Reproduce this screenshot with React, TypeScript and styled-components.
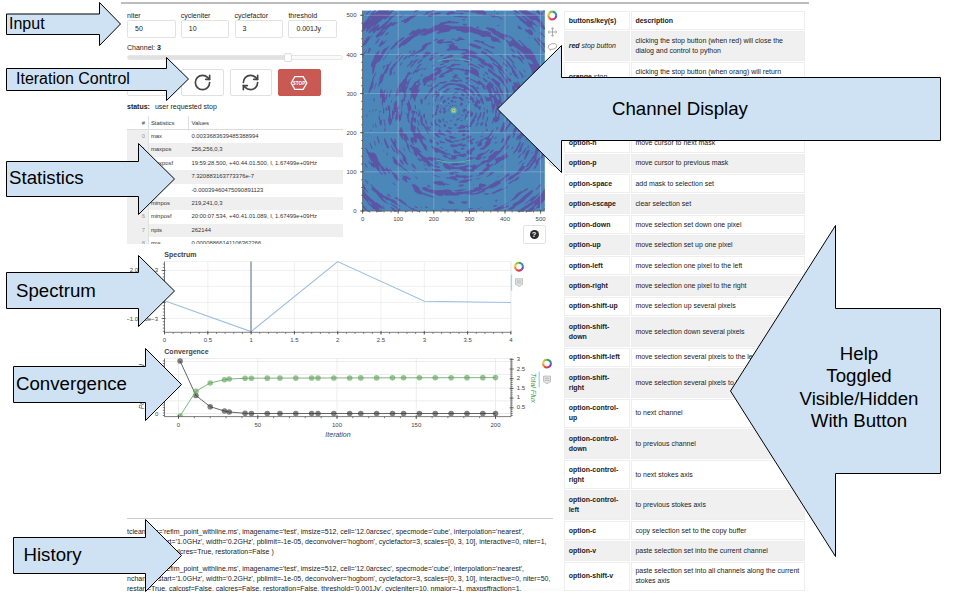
import React from "react";
import styled, { createGlobalStyle } from "styled-components";
import { RotateCw, RefreshCw } from "lucide-react";

const GlobalStyle = createGlobalStyle`
  * { box-sizing: border-box; }
  body { margin: 0; background: #fff; }
  svg text { font-family: "Liberation Sans", Arial, sans-serif; }
`;

const Stage = styled.main`
  position: relative;
  width: 966px;
  height: 599px;
  overflow: hidden;
  font-family: "Liberation Sans", Arial, sans-serif;
  color: #222;
`;

const Panel = styled.section`
  display: grid;
  grid-template-columns: 437px 241px;
  width: 688px;
  height: 589px;
  margin: 2px 0 0 121px;
  padding-left: 6px;
  border-top: 2px solid #bdbdbd;
  overflow: hidden;
  background: linear-gradient(#fff 0 581px, #f8f8f8 589px);
`;

const Column = styled.div`
  display: flex;
  flex-direction: column;
  min-width: 0;
`;

const TopArea = styled.div`
  display: grid;
  grid-template-columns: 216px 217px;
  height: 240px;
  overflow: hidden;
`;

const Controls = styled.div`
  display: flex;
  flex-direction: column;
  padding-top: 7px;
  font-size: 7px;
`;

const Fields = styled.div`
  display: grid;
  grid-template-columns: repeat(4, 48.5px);
  column-gap: 5.3px;
`;

const Field = styled.label`
  line-height: 9px;
`;

const FieldBox = styled.div`
  height: 18px;
  padding: 0 7px;
  border: 1px solid #e2e2e2;
  border-radius: 2px;
  line-height: 16px;
`;

const ChannelLabel = styled.div`
  margin-top: 5px;
  line-height: 9px;
`;

const Track = styled.div`
  display: flex;
  align-items: center;
  height: 5px;
  margin-top: 3px;
  border: 1px solid #e6e6e6;
  border-radius: 3px;
  background: linear-gradient(90deg, #e1e1e1 0 158px, #fafafa 158px);
`;

const Handle = styled.div`
  width: 8px;
  height: 9px;
  flex: none;
  margin-left: 156px;
  border: 1px solid #ddd;
  border-radius: 2px;
  background: #fff;
`;

const Buttons = styled.div`
  display: flex;
  gap: 6px;
  margin-top: 9px;
`;

const IconButton = styled.button<{ $stop?: boolean; $wideGap?: boolean }>`
  display: flex;
  align-items: center;
  justify-content: center;
  width: 42.4px;
  height: 27px;
  padding: 0;
  margin-right: ${(p) => (p.$wideGap ? "6px" : "0")};
  border: 1px solid ${(p) => (p.$stop ? "#c9564f" : "#e0e0e0")};
  border-radius: 2px;
  background: ${(p) => (p.$stop ? "#c95953" : "#fff")};
  color: #444;
`;

const Status = styled.div`
  display: flex;
  gap: 5px;
  margin-top: 5.5px;
  line-height: 9px;
`;

const Stats = styled.div`
  margin-top: 5px;
  font-size: 5.9px;
  color: #333;
`;

const StatRow = styled.div<{ $shade?: boolean; $head?: boolean }>`
  display: grid;
  grid-template-columns: 21.5px 40.5px 1fr;
  height: ${(p) => (p.$head ? "14.3px" : "13.45px")};
  line-height: ${(p) => (p.$head ? "15px" : "13.4px")};
  background: ${(p) => (p.$shade ? "#efefef" : "#fff")};
  border-bottom: ${(p) => (p.$head ? "0.5px solid #ddd" : "0")};
  white-space: nowrap;
`;

const StatIndex = styled.span<{ $head?: boolean }>`
  padding-right: 2.5px;
  text-align: right;
  color: ${(p) => (p.$head ? "#444" : "#999")};
  background: ${(p) => (p.$head ? "transparent" : "#efefef")};
  border-right: 1px solid #e0e0e0;
`;

const StatCell = styled.span<{ $divider?: boolean }>`
  padding-left: 2.4px;
  border-right: ${(p) => (p.$divider ? "1px solid #e0e0e0" : "0")};
`;

const HelpButton = styled.button`
  display: flex;
  align-items: center;
  justify-content: center;
  width: 23px;
  height: 19px;
  margin: 4px 0 0 179.5px;
  padding: 0;
  border: 1px solid #e3e3e3;
  border-radius: 2px;
  background: #fff;
`;

const HelpDot = styled.span`
  width: 9px;
  height: 9px;
  border-radius: 50%;
  background: #2b2b2b;
  color: #fff;
  font: bold 7.5px/9px "Liberation Sans", sans-serif;
  text-align: center;
`;

const History = styled.div`
  width: 426px;
  margin-top: 76px;
  padding-top: 8px;
  border-top: 1px solid #ccc;
  font-size: 7.01px;
  line-height: 10px;
  color: #222;
`;

const HistoryEntry = styled.p`
  margin: 0 0 7px;
  white-space: pre;
`;

const HistoryLine = styled.span`
  display: block;
`;

const HelpTable = styled.div`
  display: flex;
  flex-direction: column;
  padding-top: 7px;
`;

const HelpRow = styled.div<{ $shade: boolean; $lines: number }>`
  display: grid;
  grid-template-columns: 65.5px 174px;
  column-gap: 1.2px;
  height: ${(p) => 10.35 + p.$lines * 10.1}px;
  padding-bottom: 1px;
  font-size: 6.98px;
  line-height: 10px;
  white-space: nowrap;
  > div { background: ${(p) => (p.$shade ? "#f0f0f0" : "#fff")}; }
`;

const HelpCell = styled.div<{ $bold?: boolean }>`
  display: flex;
  flex-direction: column;
  justify-content: center;
  padding-left: 3.7px;
  border: 1px solid #eeeeee;
  font-weight: ${(p) => (p.$bold ? "bold" : "normal")};
  color: #222;
`;

const HelpLine = styled.span`
  display: block;
  height: 10px;
`;

const PlainText = styled.span`
  font-weight: normal;
`;

const Plot = styled.svg`
  display: block;
  flex: none;
`;

const ArrowBox = styled.div<{ $x: number; $y: number; $w: number; $h: number }>`
  position: absolute;
  left: ${(p) => p.$x}px;
  top: ${(p) => p.$y}px;
  width: ${(p) => p.$w}px;
  height: ${(p) => p.$h}px;
  display: grid;
  align-items: center;
  > * { grid-area: 1 / 1; }
`;

const ArrowText = styled.span<{ $pad: number; $size: number; $lift: number; $centerWidth?: number }>`
  z-index: 1;
  margin-left: ${(p) => p.$pad}px;
  margin-bottom: ${(p) => p.$lift}px;
  width: ${(p) => (p.$centerWidth ? `${p.$centerWidth}px` : "auto")};
  text-align: ${(p) => (p.$centerWidth ? "center" : "left")};
  font-size: ${(p) => p.$size}px;
  line-height: 22.3px;
  white-space: pre;
  color: #000;
`;

type ArrowProps = {
  tail: number; neck: number; tip: number;
  top: number; bodyTop: number; bodyBottom: number; bottom: number;
  text: string; pad: number; size?: number; lift?: number; centerWidth?: number;
};

function Arrow({ tail, neck, tip, top, bodyTop, bodyBottom, bottom, text, pad, size = 18.67, lift = 0, centerWidth }: ArrowProps) {
  const x = Math.floor(Math.min(tail, tip)) - 1;
  const y = Math.floor(top) - 1;
  const w = Math.ceil(Math.abs(tip - tail)) + 3;
  const h = Math.ceil(bottom - top) + 3;
  const mid = (top + bottom) / 2;
  return (
    <ArrowBox $x={x} $y={y} $w={w} $h={h}>
      <Plot width={w} height={h} viewBox={`${x} ${y} ${w} ${h}`}>
        <path
          d={`M${tail} ${bodyTop}H${neck}V${top}L${tip} ${mid}L${neck} ${bottom}V${bodyBottom}H${tail}Z`}
          fill="#cfe2f3" stroke="#000" strokeWidth="1"
        />
      </Plot>
      <ArrowText $pad={pad} $size={size} $lift={lift} $centerWidth={centerWidth}>{text}</ArrowText>
    </ArrowBox>
  );
}

const RING = ["#2f9e5b", "#3a7fc4", "#6a4fb3", "#c22f7c", "#e2483c", "#f08a2c", "#eec23a", "#8fc04a"];

function BokehLogo({ x, y }: { x: number; y: number }) {
  const pt = (a: number, r: number) => `${x + r * Math.sin(a)} ${y - r * Math.cos(a)}`;
  return (
    <g fill="none" strokeWidth="2.1">
      {RING.map((c, i) => {
        const a = (i * Math.PI) / 4;
        return <path key={c} stroke={c} d={`M${pt(a, 3.9)}A3.9 3.9 0 0 1 ${pt(a + 0.82, 3.9)}`} />;
      })}
    </g>
  );
}

function HoverIcon({ x, y }: { x: number; y: number }) {
  return (
    <g>
      <path d={`M${x - 3.5} ${y - 3.5}h7v5.5l-3.5 2.2l-3.5 -2.2z`} fill="#e4e4e4" stroke="#b5b5b5" strokeWidth=".8" />
      <path d={`M${x - 2.2} ${y - 1.3}h4.4M${x - 2.2} ${y + 0.7}h4.4`} stroke="#a5a5a5" strokeWidth=".7" />
    </g>
  );
}

/* Sky image: concentric sidelobe rings around a point source. */
const CX = 453.7, CY = 110.5, X0 = 362.6, X1 = 544.8, Y0 = 10.6, Y1 = 211;

function hash(i: number, j: number) {
  let n = (Math.imul(i, 374761393) + Math.imul(j, 668265263)) | 0;
  n = Math.imul(n ^ (n >>> 13), 1274126177);
  return ((n ^ (n >>> 16)) >>> 0) / 4294967295;
}
function noise(x: number, y: number) {
  const i = Math.floor(x), j = Math.floor(y);
  const s = (t: number) => t * t * (3 - 2 * t);
  const u = s(x - i), v = s(y - j);
  return (hash(i, j) * (1 - u) + hash(i + 1, j) * u) * (1 - v) + (hash(i, j + 1) * (1 - u) + hash(i + 1, j + 1) * u) * v;
}
const bump = (v: number, c: number, w: number) => Math.exp(-(((v - c) / w) ** 2));

function sidelobes() {
  const step = 0.6;
  let d = "";
  for (let y = Y0; y < Y1; y += step) {
    let start = -1;
    for (let x = X0; x < X1 + step; x += step) {
      const dx = x - CX, dy = y - CY;
      const t = Math.atan2(dy, dx);
      const a = Math.abs(t);
      const fold = a > Math.PI / 2 ? Math.PI - a : a;
      const r = Math.hypot(dx, dy);
      const n = noise(r / 1.5 + 40, t * (6 + r / 11) + 90) * 0.6 + noise(r / 3.4 + 7, t * 5.5 + 30) * 0.4;
      const main = 83 + 11 * bump(fold, 0.62, 0.3);
      const steep = Math.min(1, fold / 0.45);
      let level = 0.37;
      level += 0.42 * bump(r, main, 3.2) * (bump(fold, 1.57, 0.5) + bump(fold, 0.58, 0.22));
      level -= 0.13 * bump(r, main + 10, 6.5) + 0.1 * bump(r, main - 8, 3.5);
      level -= 0.1 * (1 - steep) * (r > 85 ? 1 : 0);
      level += 0.3 * bump(r, 123, 3.4) * bump(fold, 0.9, 0.35);
      level += 0.16 * bump(r, 112, 2.6) * bump(fold, 0.9, 0.3);
      level += 0.1 * bump(r, 70, 4) * (1 - steep * 0.6);
      level += 0.12 * bump(r, 57, 3.5) + 0.16 * bump(r, 43, 4);
      level += 0.05 * bump(r, 31, 5) - 0.1 * bump(r, 6, 5);
      if (r < 34) level += 0.13 * Math.sin(r * 1.5);
      const on = x < X1 && r > 5 && n < level;
      if (on && start < 0) start = x;
      if (!on && start >= 0) {
        d += `M${start.toFixed(1)} ${y.toFixed(1)}H${Math.min(x, X1).toFixed(1)}v.65H${start.toFixed(1)}z`;
        start = -1;
      }
    }
  }
  return d;
}
const SIDELOBES = sidelobes();
const range = (n: number) => Array.from({ length: n }, (_, i) => i);

function ChannelPlot() {
  const px = (v: number) => 362.6 + v * 0.356;
  const py = (v: number) => 211 - v * 0.3915;
  return (
    <Plot width="217" height="217" viewBox="343 4 217 217">
      <rect x={X0} y={Y0} width={X1 - X0} height={Y1 - Y0} fill="#4b87b9" />
      <path d={SIDELOBES} fill="#5c50a3" fillOpacity=".92" />
      <path d="M438 61q16 -4.5 33 0M436 160q17 5 34 0" fill="none" stroke="#58b0ac" strokeWidth="1.2" />
      <path d="M441 91v5M441 102v4M468 105v6M467 117v3M455 79h2M416 84h2M490 137h2M473 103h2" stroke="#5cb2aa" strokeWidth=".8" />
      <g stroke="#c9d9ea" strokeOpacity=".42" strokeWidth=".8">
        {range(6).map((i) => (
          <path key={i} d={`M${px(i * 100)} ${Y0}V${Y1}M${X0} ${py(i * 100)}H${X1}`} />
        ))}
      </g>
      <circle cx={CX} cy={CY} r="2.9" fill="#65c2a5" />
      <circle cx={CX} cy={CY} r="1.5" fill="#e8cf7a" />
      <circle cx={CX} cy={CY} r=".7" fill="#d4594e" />
      <g stroke="#444" strokeWidth=".7">
        <path d={`M${X0} ${Y0}V${Y1}H${X1}`} fill="none" />
        {range(6).map((i) => <path key={i} d={`M${px(i * 100)} 209.4v4.4M360 ${py(i * 100)}h4`} />)}
        {range(26).map((i) => <path key={i} d={`M${px(i * 20)} 211v1.5M361.2 ${py(i * 20)}h1.4`} />)}
      </g>
      <g fontSize="6" fill="#444">
        {range(6).map((i) => (
          <React.Fragment key={i}>
            <text x={px(i * 100)} y="221" textAnchor="middle">{i * 100}</text>
            <text x="356.5" y={py(i * 100) + 2.2} textAnchor="end">{i * 100}</text>
          </React.Fragment>
        ))}
      </g>
      <BokehLogo x={552.3} y={15.5} />
      <path d="M552.5 27.8v8.4M548.3 32h8.4M551.2 29l1.3-1.4 1.3 1.4M551.2 35l1.3 1.4 1.3-1.4M549.5 30.7l-1.4 1.3 1.4 1.3M555.5 30.7l1.4 1.3-1.4 1.3" fill="none" stroke="#999" strokeWidth=".8" />
      <ellipse cx="552.5" cy="46.5" rx="4.4" ry="2.8" transform="rotate(-15 552.5 46.5)" fill="none" stroke="#aaa" strokeWidth=".9" />
      <path d="M549.5 49l1 2.2M549 162q2 5 7 4" fill="none" stroke="#bbb" strokeWidth=".9" />
    </Plot>
  );
}

function SpectrumPlot() {
  return (
    <Plot width="433" height="102" viewBox="127 244 433 102">
      <text x="164.3" y="257.3" fontSize="7" fontWeight="bold" fill="#444">Spectrum</text>
      <g stroke="#ececec" strokeWidth=".8" fill="none">
        <path d="M164.5 261.6H511V332" />
        {[270.5, 286.4, 302.5, 318.5].map((y) => <path key={y} d={`M164.5 ${y}H511`} />)}
        {range(9).map((i) => <path key={i} d={`M${164.5 + i * 43.3} 261.6V332`} />)}
      </g>
      <path d="M251 261.6V332" stroke="#70859a" strokeWidth="1.2" />
      <path d="M164.5 300.8L251 331.6L337.7 261.6L424.4 301.3L511 302.5" fill="none" stroke="#9dbfdf" strokeWidth="1.1" />
      <g stroke="#444" strokeWidth=".7" fill="none">
        <path d="M164.5 261.6V332.3H511" />
        {range(9).map((i) => <path key={i} d={`M${164.5 + i * 43.3} 330.8v3.8`} />)}
        {range(41).map((i) => <path key={i} d={`M${164.5 + i * 8.66} 332.3v1.6`} />)}
        {range(22).map((i) => <path key={i} d={`M162.8 ${264.1 + i * 3.2}h1.7`} />)}
        {[270.5, 286.4, 302.5, 318.5].map((y) => <path key={y} d={`M161.6 ${y}h4`} />)}
      </g>
      <g fontSize="6" fill="#444">
        {range(9).map((i) => <text key={i} x={164.5 + i * 43.3} y="342.2" textAnchor="middle">{i / 2}</text>)}
        <text x="158.2" y="272.3" textAnchor="end">2.0000e−3</text>
        <text x="158.2" y="320.8" textAnchor="end">−1.0000e−3</text>
      </g>
      <path d="M511.5 274.5V290.5" stroke="#a6d2ee" strokeWidth="1.3" />
      <BokehLogo x={519} y={266.7} />
      <HoverIcon x={519} y={282.3} />
    </Plot>
  );
}

const ITERATIONS = [1, 11, 20, 29, 32, 42, 46, 56, 64, 74, 84, 88, 98, 108, 115, 125, 135, 142, 152, 162, 172, 182, 192, 200];
const RESIDUAL = [361, 395.5, 406.7, 411, 412, 413.3];
const FLUX = [416, 391.2, 383, 379.7, 379, 378.3];

function ConvergencePlot() {
  const px = (v: number) => 178.5 + v * 1.585;
  const res = ITERATIONS.map((v, i) => [px(v), RESIDUAL[i] ?? 413.5]);
  const flux = ITERATIONS.map((v, i) => [px(v), FLUX[i] ?? 378.4 - i * 0.035]);
  const line = (p: number[][]) => "M" + p.map((q) => q.join(" ")).join("L");
  return (
    <Plot width="433" height="96" viewBox="127 346 433 96">
      <clipPath id="frame"><rect x="164" y="356" width="347" height="60.6" /></clipPath>
      <text x="164.3" y="354" fontSize="7" fontWeight="bold" fill="#444">Convergence</text>
      <g stroke="#e8e8e8" strokeWidth=".8" fill="none">
        <path d="M164.5 358.5H511" />
        {[361.5, 374.5, 388, 400.8, 413.5].map((y) => <path key={y} d={`M164.5 ${y}H511`} />)}
        {range(5).map((i) => <path key={i} d={`M${px(i * 50)} 358.5V416.5`} />)}
      </g>
      <g clipPath="url(#frame)">
        <path d={line(res)} fill="none" stroke="#666" strokeWidth="1" />
        {res.map(([x, y]) => <circle key={x} cx={x} cy={y} r="2.8" fill="#333" fillOpacity=".62" />)}
        <path d={line(flux)} fill="none" stroke="#7fb67c" strokeWidth="1" />
        {flux.map(([x, y]) => <circle key={x} cx={x} cy={y} r="2.8" fill="#5ba256" fillOpacity=".62" />)}
      </g>
      <g stroke="#444" strokeWidth=".7" fill="none">
        <path d="M164.5 358.5V416.6H511V358.5" />
        {range(5).map((i) => <path key={i} d={`M${px(i * 50)} 415v4`} />)}
        {range(21).map((i) => <path key={i} d={`M${px(i * 10)} 416.6v1.6`} />)}
        {range(22).map((i) => <path key={i} d={`M162.8 ${360.9 + i * 2.6}h1.7`} />)}
        {range(30).map((i) => <path key={i} d={`M511 ${359.3 + i * 1.94}h1.7`} />)}
        {range(6).map((i) => <path key={i} d={`M509.6 ${359.3 + i * 9.7}h4.2`} />)}
      </g>
      <g fontSize="6" fill="#444">
        {range(5).map((i) => <text key={i} x={px(i * 50)} y="427" textAnchor="middle">{i * 50}</text>)}
        {["3", "2.5", "2", "1.5", "1", "0.5"].map((t, i) => <text key={t} x="516.8" y={361 + i * 9.6}>{t}</text>)}
        <text x="158.3" y="415.5" textAnchor="end">0</text>
      </g>
      <text x="338" y="437.2" textAnchor="middle" fontSize="7" fontStyle="italic" fill="#444">Iteration</text>
      <text transform="translate(531.2 373) rotate(90)" fontSize="7" fontStyle="italic" fill="#4f9d4a">Total Flux</text>
      <text transform="translate(144 409.3) rotate(-90)" fontSize="7" fontStyle="italic" fill="#444">Peak Residual</text>
      <path d="M539.2 371.5V387.5" stroke="#a6d2ee" strokeWidth="1.3" />
      <BokehLogo x={547} y={363.6} />
      <HoverIcon x={547} y={379.6} />
    </Plot>
  );
}

const FIELDS = [["niter", "50"], ["cycleniter", "10"], ["cyclefactor", "3"], ["threshold", "0.001Jy"]];

const STATS = [
  ["max", "0.0033683639485388994"],
  ["maxpos", "256,256,0,3"],
  ["maxposf", "19:59:28.500, +40.44.01.500, I, 1.67499e+09Hz"],
  ["mean", "7.320883163773376e-7"],
  ["min", "-0.00039460475090891123"],
  ["minpos", "219,241,0,3"],
  ["minposf", "20:00:07.534, +40.41.01.089, I, 1.67499e+09Hz"],
  ["npts", "262144"],
  ["rms", "0.00008866141106362266"],
];

type Help = { keys: React.ReactNode[]; text: string[] };
const HELP: Help[] = [
  { keys: ["buttons/key(s)"], text: ["description"] },
  { keys: [<i key="r">red <PlainText>stop button</PlainText></i>], text: ["clicking the stop button (when red) will close the", "dialog and control to python"] },
  { keys: [<span key="o">orange <PlainText><i>stop</i></PlainText></span>, ""], text: ["clicking the stop button (when orang) will return", "", ""] },
  { keys: [""], text: ["", ""] },
  { keys: ["option-n"], text: ["move cursor to next mask"] },
  { keys: ["option-p"], text: ["move cursor to previous mask"] },
  { keys: ["option-space"], text: ["add mask to selection set"] },
  { keys: ["option-escape"], text: ["clear selection set"] },
  { keys: ["option-down"], text: ["move selection set down one pixel"] },
  { keys: ["option-up"], text: ["move selection set up one pixel"] },
  { keys: ["option-left"], text: ["move selection one pixel to the left"] },
  { keys: ["option-right"], text: ["move selection one pixel to the right"] },
  { keys: ["option-shift-up"], text: ["move selection up several pixels"] },
  { keys: ["option-shift-", "down"], text: ["move selection down several pixels"] },
  { keys: ["option-shift-left"], text: ["move selection several pixels to the left"] },
  { keys: ["option-shift-", "right"], text: ["move selection several pixels to the right"] },
  { keys: ["option-control-", "up"], text: ["to next channel"] },
  { keys: ["option-control-", "down"], text: ["to previous channel"] },
  { keys: ["option-control-", "right"], text: ["to next stokes axis"] },
  { keys: ["option-control-", "left"], text: ["to previous stokes axis"] },
  { keys: ["option-c"], text: ["copy selection set to the copy buffer"] },
  { keys: ["option-v"], text: ["paste selection set into the current channel"] },
  { keys: ["option-shift-v"], text: ["paste selection set into all channels along the current", "stokes axis"] },
];

const HISTORY = [
  [
    "tclean( vis='refim_point_withline.ms', imagename='test', imsize=512, cell='12.0arcsec', specmode='cube', interpolation='nearest',",
    "nchan=5, start='1.0GHz', width='0.2GHz', pblimit=-1e-05, deconvolver='hogbom', cyclefactor=3, scales=[0, 3, 10], interactive=0, niter=1,",
    "calcpsf=True, calcres=True, restoration=False )",
  ],
  [
    "tclean( vis='refim_point_withline.ms', imagename='test', imsize=512, cell='12.0arcsec', specmode='cube', interpolation='nearest',",
    "nchan=5, start='1.0GHz', width='0.2GHz', pblimit=-1e-05, deconvolver='hogbom', cyclefactor=3, scales=[0, 3, 10], interactive=0, niter=50,",
    "restart=True, calcpsf=False, calcres=False, restoration=False, threshold='0.001Jy', cycleniter=10, nmajor=-1, maxpsffraction=1,",
  ],
];

export default function App() {
  return (
    <Stage>
      <GlobalStyle />
      <Panel>
        <Column>
          <TopArea>
            <Controls>
              <Fields>
                {FIELDS.map(([label, value]) => (
                  <Field key={label}>{label}<FieldBox>{value}</FieldBox></Field>
                ))}
              </Fields>
              <ChannelLabel>Channel: <b>3</b></ChannelLabel>
              <Track><Handle /></Track>
              <Buttons>
                <IconButton $wideGap />
                <IconButton><RotateCw size={19} strokeWidth={2.1} /></IconButton>
                <IconButton><RefreshCw size={19} strokeWidth={2.1} /></IconButton>
                <IconButton $stop>
                  <Plot width="18" height="16" viewBox="0 0 18 16">
                    <path d="M1.2 8L4.8 1.6H13.2L16.8 8L13.2 14.4H4.8Z" fill="none" stroke="#fff" strokeWidth="1.3" />
                    <text x="9" y="9.7" textAnchor="middle" fontSize="4.6" fontWeight="bold" fill="#fff">STOP</text>
                  </Plot>
                </IconButton>
              </Buttons>
              <Status><b>status:</b><span>user requested stop</span></Status>
              <Stats>
                <StatRow $head>
                  <StatIndex $head>#</StatIndex>
                  <StatCell $divider>Statistics</StatCell>
                  <StatCell>Values</StatCell>
                </StatRow>
                {STATS.map(([name, value], i) => (
                  <StatRow key={name} $shade={i % 2 === 1}>
                    <StatIndex>{i}</StatIndex>
                    <StatCell>{name}</StatCell>
                    <StatCell>{value}</StatCell>
                  </StatRow>
                ))}
              </Stats>
            </Controls>
            <div>
              <ChannelPlot />
              <HelpButton><HelpDot>?</HelpDot></HelpButton>
            </div>
          </TopArea>
          <SpectrumPlot />
          <ConvergencePlot />
          <History>
            {HISTORY.map((entry, i) => (
              <HistoryEntry key={i}>
                {entry.map((line) => <HistoryLine key={line}>{line}</HistoryLine>)}
              </HistoryEntry>
            ))}
          </History>
        </Column>
        <HelpTable>
          {HELP.map((row, i) => (
            <HelpRow key={i} $shade={i % 2 === 1} $lines={Math.max(row.keys.length, row.text.length)}>
              <HelpCell $bold>{row.keys.map((k, j) => <HelpLine key={j}>{k}</HelpLine>)}</HelpCell>
              <HelpCell $bold={i === 0}>{row.text.map((t, j) => <HelpLine key={j}>{t}</HelpLine>)}</HelpCell>
            </HelpRow>
          ))}
        </HelpTable>
      </Panel>

      <Arrow tail={6.5} neck={99.5} tip={120.5} top={2.5} bodyTop={14} bodyBottom={34.5} bottom={45.5} text="Input" pad={4} size={16} />
      <Arrow tail={6.5} neck={166.5} tip={188.5} top={57.5} bodyTop={68.5} bodyBottom={90.5} bottom={100.5} text="Iteration Control" pad={11} size={16} />
      <Arrow tail={6.5} neck={138.5} tip={174.5} top={143.5} bodyTop={161.5} bodyBottom={196.5} bottom={214.5} text="Statistics" pad={4} lift={2} />
      <Arrow tail={6.5} neck={138.5} tip={174.5} top={255.5} bodyTop={272.5} bodyBottom={308.5} bottom={326.5} text="Spectrum" pad={11} />
      <Arrow tail={13.5} neck={145.5} tip={181.5} top={348.5} bodyTop={366.5} bodyBottom={402.5} bottom={420.5} text="Convergence" pad={4} />
      <Arrow tail={13.5} neck={145.5} tip={181.5} top={519.5} bodyTop={537.5} bodyBottom={573.5} bottom={591.5} text="History" pad={11.5} />
      <Arrow tail={940.5} neck={561.5} tip={497.5} top={45.5} bodyTop={77.5} bodyBottom={140.5} bottom={172.5} text="Channel Display" pad={116} />
      <Arrow tail={940.5} neck={835.5} tip={730.5} top={225.5} bodyTop={308.5} bodyBottom={473.5} bottom={556.5} text={"Help\nToggled\nVisible/Hidden\nWith Button"} pad={60} lift={7} centerWidth={140} />
    </Stage>
  );
}
